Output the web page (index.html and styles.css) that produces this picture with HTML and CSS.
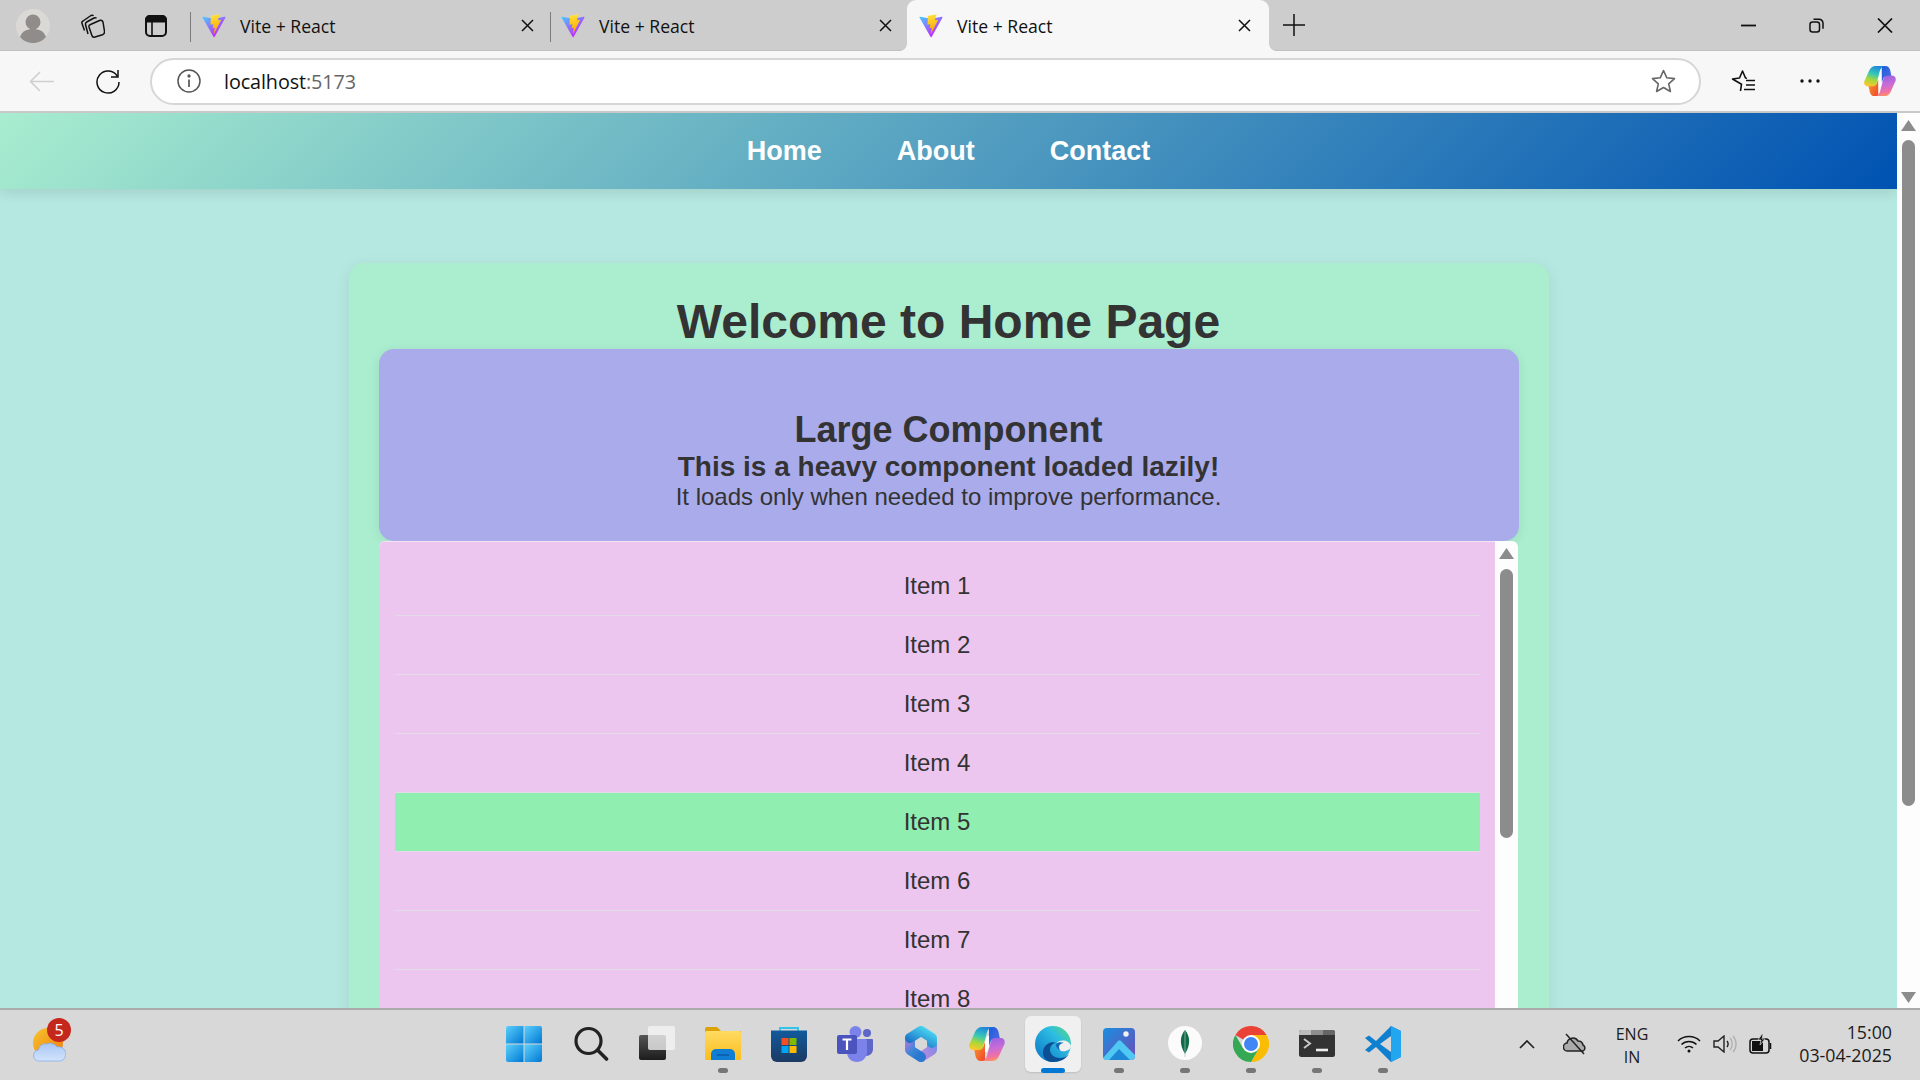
FILE: index.html
```html
<!DOCTYPE html>
<html lang="en">
<head>
<meta charset="utf-8">
<title>Vite + React</title>
<link rel="stylesheet" href="styles.css">
</head>
<body>
<svg class="defs" aria-hidden="true">
  <defs>
    <linearGradient id="viteA" x1="6" y1="33" x2="235" y2="344" gradientUnits="userSpaceOnUse"><stop offset="0" stop-color="#41D1FF"/><stop offset="1" stop-color="#BD34FE"/></linearGradient>
    <linearGradient id="viteB" x1="194" y1="8" x2="236" y2="293" gradientUnits="userSpaceOnUse"><stop offset="0" stop-color="#FFEA83"/><stop offset=".08" stop-color="#FFDD35"/><stop offset="1" stop-color="#FFA800"/></linearGradient>
    <symbol id="vite" viewBox="0 0 410 404">
      <path fill="url(#viteA)" d="M399.641 59.5246L215.643 388.545C211.844 395.338 202.084 395.378 198.228 388.618L10.5817 59.5563C6.38087 52.1896 12.6802 43.2665 21.0281 44.7586L205.223 77.6824C206.398 77.8924 207.601 77.8904 208.776 77.6763L389.119 44.8058C397.439 43.2894 403.768 52.1434 399.641 59.5246Z"/>
      <path fill="url(#viteB)" d="M292.965 1.5744L156.801 28.2552C154.563 28.6937 152.906 30.5903 152.771 32.8664L144.395 174.33C144.198 177.662 147.258 180.248 150.51 179.498L188.42 170.749C191.967 169.931 195.172 173.055 194.443 176.622L183.18 231.775C182.422 235.487 185.907 238.661 189.532 237.56L212.947 230.446C216.577 229.344 220.065 232.527 219.297 236.242L201.398 322.875C200.278 328.294 207.486 331.249 210.492 326.603L212.5 323.5L323.454 102.072C325.312 98.3645 322.108 94.137 318.036 94.9228L279.014 102.454C275.347 103.161 272.227 99.746 273.262 96.1583L298.731 7.86689C299.767 4.27314 296.636 0.855181 292.965 1.5744Z"/>
    </symbol>
    <linearGradient id="copL" x1=".6" y1="0" x2=".3" y2="1"><stop offset="0" stop-color="#1f86dc"/><stop offset=".4" stop-color="#35c8b8"/><stop offset=".7" stop-color="#a8d83a"/><stop offset="1" stop-color="#fcc82a"/></linearGradient>
    <linearGradient id="copR" x1=".4" y1="0" x2=".6" y2="1"><stop offset="0" stop-color="#9a62e0"/><stop offset=".45" stop-color="#c86cd8"/><stop offset=".8" stop-color="#f272a0"/><stop offset="1" stop-color="#ff9a50"/></linearGradient>
    <linearGradient id="copT" x1="0" y1="0" x2="1" y2="1"><stop offset="0" stop-color="#1a5fd8"/><stop offset="1" stop-color="#5a6be8"/></linearGradient>
    <linearGradient id="copB" x1="0" y1="0" x2="1" y2="1"><stop offset="0" stop-color="#f8a030"/><stop offset="1" stop-color="#f0442c"/></linearGradient>
    <symbol id="copilot" viewBox="0 0 36 36">
      <path fill="#fff" d="M18 10h6l-6 16h-6z"/>
      <path fill="url(#copT)" d="M20 1h4c3 0 5 2 5.500 5L31 13h-6c-2 0-3 1-3.500 3L20 20z"/>
      <path fill="url(#copB)" d="M16 35h-4c-3 0-5-2-5.500-5L5 23h6c2 0 3-1 3.500-3L16 16z"/>
      <path fill="url(#copL)" d="M13 1h11c-3 0-5 2-6 5l-4 15c-.7 2-2 3-4 3H4c-3 0-4.500-3-3.500-6L6 6c1-3 4-5 7-5z"/>
      <path fill="url(#copR)" d="M23 35H12c3 0 5-2 6-5l4-15c.7-2 2-3 4-3h6c3 0 4.500 3 3.500 6L30 30c-1 3-4 5-7 5z"/>
    </symbol>
    <linearGradient id="winG" x1="0" y1="0" x2="1" y2="1"><stop offset="0" stop-color="#5ccffb"/><stop offset="1" stop-color="#0078d4"/></linearGradient>
    <linearGradient id="tvG" x1="0" y1="0" x2="0" y2="1"><stop offset="0" stop-color="#555"/><stop offset="1" stop-color="#1c1c1c"/></linearGradient>
    <linearGradient id="foldG" x1="0" y1="0" x2="0" y2="1"><stop offset="0" stop-color="#ffdb62"/><stop offset="1" stop-color="#fbbd1c"/></linearGradient>
    <linearGradient id="bagG" x1="0" y1="0" x2="0" y2="1"><stop offset="0" stop-color="#115a9c"/><stop offset="1" stop-color="#1c3a64"/></linearGradient>
    <linearGradient id="msA" x1="0" y1="1" x2="1" y2="0"><stop offset="0" stop-color="#1a6fc8"/><stop offset="1" stop-color="#48d6f0"/></linearGradient>
    <linearGradient id="msB" x1="0" y1="0" x2=".6" y2="1"><stop offset="0" stop-color="#a57ae0"/><stop offset=".6" stop-color="#3a86d8"/><stop offset="1" stop-color="#2a78d0"/></linearGradient>
    <linearGradient id="msC" x1="1" y1="0" x2="0" y2="1"><stop offset="0" stop-color="#7f8ae6"/><stop offset="1" stop-color="#c48adc"/></linearGradient>
    <linearGradient id="edgeG" x1="1" y1="0" x2="0" y2="1"><stop offset="0" stop-color="#5ddc72"/><stop offset=".35" stop-color="#2dbde2"/><stop offset="1" stop-color="#0a72c4"/></linearGradient>
    <linearGradient id="photoG" x1="0" y1="0" x2="1" y2="1"><stop offset="0" stop-color="#1a8fe0"/><stop offset="1" stop-color="#6c4cb8"/></linearGradient>
    <linearGradient id="sunG" x1="0" y1="0" x2="1" y2="1"><stop offset="0" stop-color="#f7c52d"/><stop offset="1" stop-color="#f07a10"/></linearGradient>
    <linearGradient id="cloudG" x1="0" y1="0" x2="0" y2="1"><stop offset="0" stop-color="#a8c7f5"/><stop offset="1" stop-color="#d2e4fb"/></linearGradient>
  </defs>
</svg>

<header class="tabstrip">
  <svg class="avatar" viewBox="0 0 34 34"><circle cx="17" cy="17" r="17" fill="#dbd9d6"/><circle cx="17" cy="13" r="7.500" fill="#8f8c89"/><path d="M4 28c2-6 7-8 13-8s11 2 13 8a17 17 0 0 1-26 0z" fill="#8f8c89"/></svg>
  <svg class="ico-collections" viewBox="0 0 24 24" fill="none" stroke="#111" stroke-width="1.500" stroke-linejoin="round"><path d="M3.500 16.500 1 9.500c-.4-1 0-2 1-2.500L10 1.500c1-.5 2-.3 2.500.3"/><path d="M7 20 4.500 10.500c-.3-1 .2-2 1.200-2.500L13 4c1-.5 2-.3 2.500.4"/><path d="M9.500 10.500 18.500 6.500c1.500-.6 3 .2 3.500 1.500l1.500 9.500c.2 1.500-.5 2.700-2 3.200L14 23c-1.500.4-2.800-.3-3.200-1.800L8 13c-.3-1 .3-2 1.500-2.500z"/></svg>
  <svg class="ico-tabs" viewBox="0 0 22 22" fill="none" stroke="#111" stroke-width="2"><rect x="1" y="1" width="20" height="20" rx="4"/><path d="M1 6.500h20V5a4 4 0 0 0-4-4H5a4 4 0 0 0-4 4z" fill="#111"/><path d="M7 6.500V21" stroke-width="1.600"/></svg>
  <div class="tab tab-first">
    <svg class="favicon"><use href="#vite"/></svg><span class="tab-title">Vite + React</span>
    <svg class="tab-x" viewBox="0 0 13 13" stroke="#111" stroke-width="1.500"><path d="M1 1l11 11M12 1 1 12"/></svg>
  </div>
  <div class="tab tab-mid">
    <svg class="favicon"><use href="#vite"/></svg><span class="tab-title">Vite + React</span>
    <svg class="tab-x" viewBox="0 0 13 13" stroke="#111" stroke-width="1.500"><path d="M1 1l11 11M12 1 1 12"/></svg>
  </div>
  <div class="tab tab-active">
    <svg class="favicon"><use href="#vite"/></svg><span class="tab-title">Vite + React</span>
    <svg class="tab-x" viewBox="0 0 13 13" stroke="#111" stroke-width="1.500"><path d="M1 1l11 11M12 1 1 12"/></svg>
  </div>
  <svg class="ico-plus" viewBox="0 0 22 22" stroke="#111" stroke-width="1.500"><path d="M11 0v22M0 11h22"/></svg>
  <div class="winbtns">
    <svg class="win-ico" viewBox="0 0 15 15" stroke="#111" stroke-width="1.800"><path d="M0 7.500h15"/></svg>
    <svg class="win-ico" viewBox="0 0 15 15" fill="none" stroke="#111" stroke-width="1.500"><rect x="1" y="4" width="9.500" height="10" rx="2.500"/><path d="M4.500 1.200h5.500a4 4 0 0 1 4 4v5.500"/></svg>
    <svg class="win-ico win-x" viewBox="0 0 16 15" stroke="#111" stroke-width="1.700"><path d="M1 .5l14 14M15 .5l-14 14"/></svg>
  </div>
</header>

<div class="toolbar">
  <svg class="ico-back" viewBox="0 0 25 21" fill="none" stroke="#cfcfcf" stroke-width="1.600"><path d="M25 10.500H1.500M11 1l-9.500 9.500L11 20"/></svg>
  <svg class="ico-reload" viewBox="0 0 24 25" fill="none" stroke="#111" stroke-width="1.500"><path d="M21.500 7.500A11 11 0 1 0 23 13"/><path d="M22 1v7h-7"/></svg>
  <div class="address">
    <svg class="ico-info" viewBox="0 0 24 24" fill="none" stroke="#555" stroke-width="1.500"><circle cx="12" cy="12" r="11"/><path d="M12 10.500V18" stroke-width="1.700"/><circle cx="12" cy="7" r=".9" fill="#555"/></svg>
    <span class="url">localhost<span class="url-port">:5173</span></span>
    <svg class="ico-star" viewBox="0 0 25 24" fill="none" stroke="#666" stroke-width="1.600" stroke-linejoin="round"><path d="M12.500 1.500l3.300 7.300 7.700.8-5.800 5.200 1.700 7.700-6.900-4-6.900 4 1.700-7.700L1.500 9.600l7.700-.8z"/></svg>
  </div>
  <svg class="ico-favs" viewBox="0 0 25 24" fill="none" stroke="#111" stroke-width="1.600" stroke-linejoin="round"><path d="M9.500 22l1-6.800L1.500 10l7-1 3-7 3 7 1.500.3"/><path d="M15 11.500h9M15 16h9M13 20.500h11"/></svg>
  <svg class="ico-dots" viewBox="0 0 20 4" fill="#111"><circle cx="2" cy="2" r="1.700"/><circle cx="10" cy="2" r="1.700"/><circle cx="18" cy="2" r="1.700"/></svg>
  <svg class="ico-copilot-top"><use href="#copilot"/></svg>
</div>

<div class="viewport">
  <main class="page">
    <nav class="topnav">
      <a class="navlink">Home</a>
      <a class="navlink">About</a>
      <a class="navlink">Contact</a>
    </nav>
    <section class="card">
      <h1 class="title">Welcome to Home Page</h1>
      <div class="heavy">
        <h2 class="heavy-title">Large Component</h2>
        <h3 class="heavy-sub">This is a heavy component loaded lazily!</h3>
        <p class="heavy-text">It loads only when needed to improve performance.</p>
      </div>
      <div class="listbox">
        <ul class="items">
          <li class="item">Item 1</li>
          <li class="item">Item 2</li>
          <li class="item">Item 3</li>
          <li class="item">Item 4</li>
          <li class="item item-hover">Item 5</li>
          <li class="item">Item 6</li>
          <li class="item">Item 7</li>
          <li class="item">Item 8</li>
        </ul>
        <div class="inner-scroll">
          <svg class="tri" viewBox="0 0 15 11" fill="#8c8c8c"><path d="M7.500 0 15 11H0z"/></svg>
          <div class="inner-thumb"></div>
        </div>
      </div>
    </section>
  </main>
  <aside class="page-scroll">
    <svg class="tri" viewBox="0 0 15 11" fill="#8c8c8c"><path d="M7.500 0 15 11H0z"/></svg>
    <div class="page-thumb"></div>
    <svg class="tri tri-down" viewBox="0 0 15 11" fill="#8c8c8c"><path d="M7.500 11 15 0H0z"/></svg>
  </aside>
</div>

<footer class="taskbar">
  <div class="weather">
    <svg class="weather-ico" viewBox="0 0 33 34"><circle cx="15" cy="15" r="15" fill="url(#sunG)"/><path d="M6.500 33a5.500 5.500 0 0 1-1-11 6.500 6.500 0 0 1 8-6 8.500 8.500 0 0 1 10.500 3 6.500 6.500 0 0 1 3.500 14z" fill="url(#cloudG)" stroke="#86aeea" stroke-width=".8"/></svg>
    <span class="badge">5</span>
  </div>
  <div class="slot"><svg class="tb-ico tb-win" viewBox="0 0 36 36"><path d="M2 0h15.500v17.500H0V2a2 2 0 0 1 2-2z" fill="url(#winG)"/><path d="M18.500 0H34a2 2 0 0 1 2 2v15.500H18.500z" fill="url(#winG)"/><path d="M0 18.500h17.500V36H2a2 2 0 0 1-2-2z" fill="url(#winG)"/><path d="M18.500 18.500H36V34a2 2 0 0 1-2 2H18.500z" fill="url(#winG)"/></svg></div>
  <div class="slot"><svg class="tb-ico" viewBox="0 0 36 36" fill="none" stroke="#222" stroke-width="3.200" stroke-linecap="round"><circle cx="15.500" cy="15" r="12.500"/><path d="M25 24.500l8.500 8.500" stroke-width="3.600"/></svg></div>
  <div class="slot"><svg class="tb-ico" viewBox="0 0 36 36"><rect x="0" y="9" width="27" height="25" rx="2" fill="url(#tvG)"/><rect x="9" y="0" width="27" height="24" rx="2" fill="#f4f4f4" fill-opacity=".78"/></svg></div>
  <div class="slot"><svg class="tb-ico" viewBox="0 0 36 36"><path d="M0 3a2 2 0 0 1 2-2h10l4 4h20v6H0z" fill="#dda208"/><rect x="0" y="5" width="36" height="29" rx="1.500" fill="url(#foldG)"/><path d="M6 34v-6a5 5 0 0 1 5-5h14a5 5 0 0 1 5 5v6z" fill="#0f7ed2"/><path d="M12 29h12" stroke="#0a4f9c" stroke-width="1.200"/></svg><i class="pill"></i></div>
  <div class="slot"><svg class="tb-ico" viewBox="0 0 36 36"><path d="M9 8V2h18v6" fill="none" stroke="#2fc4ec" stroke-width="1.800"/><path d="M0 4.500h36V30a6 6 0 0 1-6 6H6a6 6 0 0 1-6-6z" fill="url(#bagG)"/><rect x="10.500" y="12" width="7" height="7" fill="#f25022"/><rect x="18.500" y="12" width="7" height="7" fill="#7fba00"/><rect x="10.500" y="20" width="7" height="7" fill="#00a4ef"/><rect x="18.500" y="20" width="7" height="7" fill="#ffb900"/></svg></div>
  <div class="slot"><svg class="tb-ico" viewBox="0 0 36 36"><circle cx="30" cy="7" r="4" fill="#5f66c9"/><path d="M24 13h11a1 1 0 0 1 1 1v9c0 4-3 7-7 7-2 0-4-1-5-2z" fill="#5f66c9"/><circle cx="18.500" cy="6" r="6" fill="#7b83eb"/><path d="M10 13h18a2 2 0 0 1 2 2v11c0 6-5 10-10 10-6 0-10-4-10-10z" fill="#7b83eb"/><rect x="0" y="9" width="20" height="19" rx="2" fill="#4b53bc"/><path d="M5.500 13.500h9M10 13.500V24" stroke="#fff" stroke-width="2.200" fill="none"/></svg></div>
  <div class="slot"><svg class="tb-ico" viewBox="0 0 36 36" fill="none" stroke-width="10" stroke-linejoin="round" stroke-linecap="round"><path d="M29 16v8l-11 7" stroke="url(#msC)"/><path d="M18 31 7 24V12" stroke="url(#msB)"/><path d="M7 12l11-7 11 7v5" stroke="url(#msA)"/></svg></div>
  <div class="slot"><svg class="tb-ico"><use href="#copilot"/></svg></div>
  <div class="slot slot-active"><svg class="tb-ico" viewBox="0 0 36 36"><circle cx="18" cy="18" r="18" fill="url(#edgeG)"/><path d="M18 36C9 36 6 28 9 22c2-4 7-7 12-5-3 0-6 3-6 7 0 5 5 8 10 8 3 0 6-1 9-4-3 5-9 8-16 8z" fill="#0d4f94"/><path d="M36 21c-1 3-6 5-10 4-4-1-6-5-4-8 2-3 8-3 11-1 2 1 3 3 3 5z" fill="#f0f0f0"/><path d="M21 18c2-2 5-2 8-1-3 0-5 2-5 4 0 2 1 3 2 4-3-1-6-4-5-7z" fill="#0d6cb8"/></svg><i class="pill pill-active"></i></div>
  <div class="slot"><svg class="tb-ico tb-photo" viewBox="0 0 32 32"><rect width="32" height="32" rx="4" fill="url(#photoG)"/><circle cx="23" cy="6" r="2.700" fill="#f2f2f2"/><path d="M0 30 15 13c1-1 2-1 3 0L32 27v1a4 4 0 0 1-4 4H4a4 4 0 0 1-4-2z" fill="#50c8f4"/><path d="M6 32 16 21l11 11z" fill="#1f88d6"/></svg><i class="pill"></i></div>
  <div class="slot"><svg class="tb-ico" viewBox="0 0 36 36"><circle cx="18" cy="17" r="17" fill="#fbfbfb"/><path d="M18 4c5 6 6 14 0 24-6-10-5-18 0-24z" fill="#0f6b4a"/><path d="M18 4v27" stroke="#a6c8b4" stroke-width=".7"/></svg><i class="pill"></i></div>
  <div class="slot"><svg class="tb-ico" viewBox="0 0 36 36"><path d="M18 18 2.400 9A18 18 0 0 1 33.600 9H18z" fill="#ea4335"/><path d="M33.600 9A18 18 0 0 1 18 36l7.800-13.500L18 9z" fill="#fbbc04"/><path d="M18 36A18 18 0 0 1 2.400 9l7.800 13.500 15.600 0z" fill="#34a853"/><circle cx="18" cy="18" r="9" fill="#fff"/><circle cx="18" cy="18" r="7" fill="#4285f4"/></svg><i class="pill"></i></div>
  <div class="slot"><svg class="tb-ico" viewBox="0 0 36 36"><rect y="4" width="36" height="27" rx="2.500" fill="#333"/><path d="M0 9V6.500A2.500 2.500 0 0 1 2.500 4H12v5z" fill="#bdbdbd"/><path d="M12 4h12v5H12z" fill="#8e8e8e"/><path d="M24 4h9.500A2.500 2.500 0 0 1 36 6.500V9H24z" fill="#666"/><path d="M5 13l6 4.500L5 22" fill="none" stroke="#c9c9c9" stroke-width="2"/><path d="M17 24h12" stroke="#eee" stroke-width="2.600"/></svg><i class="pill"></i></div>
  <div class="slot"><svg class="tb-ico" viewBox="0 0 36 36"><path fill-rule="evenodd" d="M26 0 11 15 4 9.500 0 12l7 6-7 6 4 2.500L11 21l15 15 10-5V5zM26 10 15 18l11 8z" fill="#0f7fd0"/><path d="M26 0l10 5v26l-10 5z" fill="#23a6f0"/></svg><i class="pill"></i></div>
  <div class="tray">
    <svg class="tr-chev" viewBox="0 0 16 9" fill="none" stroke="#222" stroke-width="1.700"><path d="M1 8l7-7 7 7"/></svg>
    <svg class="tr-cloud" viewBox="0 0 24 22" fill="none" stroke="#222" stroke-width="1.500"><path d="M5 18a4 4 0 0 1-1-8 6 6 0 0 1 11-2 5 5 0 0 1 5 4 3.300 3.300 0 0 1 0 6z" fill="#8d8d8d" fill-opacity=".6"/><path d="M3 1l18 20"/></svg>
    <div class="lang"><span>ENG</span><span>IN</span></div>
    <svg class="tr-wifi" viewBox="0 0 24 18" fill="none" stroke="#111" stroke-width="1.500"><path d="M1 6a16 16 0 0 1 22 0M4.500 9.500a11 11 0 0 1 15 0M8 13a6 6 0 0 1 8 0"/><circle cx="12" cy="16" r="1.500" fill="#111" stroke="none"/></svg>
    <svg class="tr-vol" viewBox="0 0 24 18" fill="none" stroke="#222" stroke-width="1.400"><path d="M1 6h4l6-5v16l-6-5H1z"/><path d="M14 6a5 5 0 0 1 0 6"/><path d="M17 3a9 9 0 0 1 0 12M20 1a12 12 0 0 1 0 16" stroke="#b2b2b2"/></svg>
    <svg class="tr-bat" viewBox="0 0 23 20" fill="none" stroke="#111" stroke-width="1.500"><rect x="1" y="5" width="19" height="14" rx="3"/><path d="M21.500 9v6"/><path d="M3 7h9l2 2v8H3z" fill="#111" stroke="none"/><path d="M13 0l-4 6h3l-1 5 5-6h-3l1-5z" fill="#111" stroke="#d8d8d8" stroke-width=".7"/></svg>
    <div class="clock"><span>15:00</span><span>03-04-2025</span></div>
  </div>
</footer>
</body>
</html>
```

FILE: styles.css
```css
* { box-sizing: border-box; }
html, body { margin: 0; height: 100%; }
body {
  display: flex;
  flex-direction: column;
  height: 100vh;
  overflow: hidden;
  font-family: "Liberation Sans", Arial, sans-serif;
  background: #f7f7f7;
}
.defs { display: block; width: 0; height: 0; }

/* tab strip */
.tabstrip {
  flex: 0 0 51px;
  display: flex;
  align-items: flex-start;
  background: #cdcdcd;
  padding-left: 16px;
  box-shadow: inset 0 -1px 0 #c0c0c0;
}
.avatar { width: 34px; height: 34px; margin-top: 9px; flex: none; }
.ico-collections { width: 24px; height: 24px; margin: 14px 0 0 31px; flex: none; }
.ico-tabs { width: 22px; height: 22px; margin: 15px 0 0 40px; flex: none; }
.tab {
  height: 51px;
  display: flex;
  align-items: center;
  flex: none;
  padding: 0 16px 0 12px;
  position: relative;
}
.tab-first { width: 360px; margin-left: 23px; }
.tab-mid { width: 357px; padding-right: 15px; padding-left: 11px; }
.tab-first::before, .tab-mid::before {
  content: "";
  position: absolute;
  left: 0;
  top: 12px;
  height: 30px;
  border-left: 1px solid #7d7d7d;
}
.tab-active {
  width: 362px;
  padding-right: 18px;
  background: #f7f7f7;
  border-radius: 9px 9px 0 0;
}
.tab-active::before, .tab-active::after {
  content: "";
  position: absolute;
  bottom: 0;
  width: 7px;
  height: 7px;
}
.tab-active::before { left: -7px; background: radial-gradient(circle at 0 0, transparent 6.500px, #f7f7f7 7px); }
.tab-active::after { right: -7px; background: radial-gradient(circle at 100% 0, transparent 6.500px, #f7f7f7 7px); }
.favicon { width: 24px; height: 24px; flex: none; }
.tab-title {
  margin-left: 14px;
  flex: 1;
  font-family: "Open Sans", sans-serif;
  font-size: 17.600px;
  color: #111;
  line-height: 20px;
}
.tab-x { width: 13px; height: 13px; flex: none; }
.ico-plus { width: 22px; height: 22px; margin: 14px 0 0 14px; flex: none; }
.winbtns { margin-left: auto; display: flex; gap: 53px; padding: 18px 27px 0 0; }
.win-ico { width: 15px; height: 15px; }
.win-x { width: 16px; }

/* toolbar */
.toolbar {
  flex: 0 0 62px;
  display: flex;
  align-items: center;
  background: #f7f7f7;
  border-bottom: 2px solid #c8c8c8;
  padding-left: 29px;
}
.ico-back { width: 25px; height: 21px; flex: none; }
.ico-reload { width: 24px; height: 25px; margin-left: 42px; flex: none; }
.address {
  width: 1551px;
  height: 47px;
  margin-left: 30px;
  flex: none;
  display: flex;
  align-items: center;
  background: #fff;
  border: 2px solid #d6d6d6;
  border-radius: 24px;
  padding: 0 23px 0 25px;
}
.ico-info { width: 24px; height: 24px; flex: none; }
.url {
  margin-left: 23px;
  flex: 1;
  font-family: "Open Sans", sans-serif;
  font-size: 19.800px;
  color: #111;
  letter-spacing: -.1px;
}
.url-port { color: #666; }
.ico-star { width: 25px; height: 24px; flex: none; }
.ico-favs { width: 25px; height: 24px; margin-left: 30px; flex: none; }
.ico-dots { width: 20px; height: 4px; margin-left: 44px; flex: none; }
.ico-copilot-top { width: 34px; height: 32px; margin-left: 43px; flex: none; }

/* page */
.viewport { flex: 1; display: flex; min-height: 0; }
.page { flex: 1; min-width: 0; overflow: hidden; background: #b5e8e0; }
.topnav {
  height: 76px;
  display: flex;
  justify-content: center;
  align-items: center;
  gap: 75px;
  background: linear-gradient(135deg, #a8edcf, #0052b2);
  box-shadow: 0 4px 12px rgba(0, 0, 0, .1);
}
.navlink { font-size: 27px; font-weight: 700; color: #fff; }
.card {
  width: 1200px;
  margin: 74px auto 0;
  padding: 30px;
  background: #abedcf;
  border-radius: 15px;
  box-shadow: 0 4px 16px rgba(0, 0, 0, .08);
  color: #333;
  text-align: center;
}
.title { margin: 0; padding-top: 1px; font-size: 48px; line-height: 55px; font-weight: 700; }
.heavy {
  height: 192px;
  padding: 60px 30px 0;
  background: #aaabea;
  border-radius: 15px;
  box-shadow: 0 2px 12px rgba(0, 0, 0, .08);
}
.heavy-title { margin: 0; font-size: 36px; line-height: 42px; }
.heavy-sub { margin: 0; font-size: 28px; line-height: 32px; }
.heavy-text { margin: 0; font-size: 24px; line-height: 28px; }
.listbox {
  height: 640px;
  display: flex;
  overflow: hidden;
  background: #fdfdfd;
  border-radius: 6px 6px 0 0;
  margin-right: 1px;
}
.items {
  flex: 1;
  margin: 0;
  padding: 15px 15px 0 16px;
  list-style: none;
  background: #ecc6ee;
  border-top: 1px solid #f3e2f3;
}
.item {
  height: 59px;
  line-height: 58px;
  font-size: 24px;
  border-bottom: 1px solid #e4dbe8;
}
.item-hover { background: #90eeb0; }
.inner-scroll {
  flex: 0 0 23px;
  display: flex;
  flex-direction: column;
  align-items: center;
  padding-top: 7px;
}
.tri { width: 15px; height: 11px; flex: none; display: block; }
.inner-thumb {
  width: 13px;
  height: 269px;
  margin-top: 10px;
  border-radius: 7px;
  background: #8c8c8c;
}
.page-scroll {
  flex: 0 0 23px;
  display: flex;
  flex-direction: column;
  align-items: center;
  padding: 7px 0 5px;
  background: #fdfdfd;
}
.page-thumb {
  width: 13px;
  height: 666px;
  margin-top: 9px;
  border-radius: 7px;
  background: #8c8c8c;
}
.tri-down { margin-top: auto; }

/* taskbar */
.taskbar {
  flex: 0 0 72px;
  display: flex;
  align-items: flex-start;
  padding-top: 6px;
  background: #d8d8d8;
  border-top: 2px solid #ababab;
  gap: 10px;
  font-family: "Open Sans", sans-serif;
  color: #1c1c1c;
}
.weather { width: 487px; flex: none; position: relative; height: 56px; }
.weather-ico { width: 33px; height: 34px; display: block; margin: 12px 0 0 33px; }
.badge {
  position: absolute;
  left: 47px;
  top: 2px;
  width: 24px;
  height: 24px;
  border-radius: 50%;
  background: #c4281c;
  color: #fff;
  font-size: 16px;
  line-height: 24px;
  text-align: center;
}
.slot {
  width: 56px;
  height: 56px;
  flex: none;
  display: flex;
  flex-direction: column;
  align-items: center;
  padding-top: 10px;
}
.slot-active { background: #f0f0f0; border-radius: 6px; box-shadow: 0 1px 2px rgba(0,0,0,.12); }
.tb-ico { width: 36px; height: 36px; flex: none; display: block; }
.tb-win { margin-right: 3px; }
.tb-photo { width: 32px; height: 32px; margin: 2px 0; }
.pill { width: 10px; height: 5px; margin-top: 6px; border-radius: 3px; background: #767676; flex: none; }
.pill-active { width: 24px; background: #0078d4; }
.tray { flex: 1; height: 56px; margin-left: 98px; display: flex; align-items: center; }
.tr-chev { width: 16px; height: 9px; flex: none; }
.tr-cloud { width: 24px; height: 22px; margin-left: 28px; flex: none; }
.lang {
  width: 44px;
  margin-left: 23px;
  display: flex;
  flex-direction: column;
  align-items: center;
  font-size: 16px;
  line-height: 23px;
  padding-top: 3px;
}
.tr-wifi { width: 24px; height: 18px; margin-left: 23px; flex: none; }
.tr-vol { width: 24px; height: 18px; margin-left: 12px; flex: none; }
.tr-bat { width: 23px; height: 20px; margin-left: 12px; flex: none; }
.clock {
  margin-left: auto;
  padding-right: 28px;
  display: flex;
  flex-direction: column;
  align-items: flex-end;
  font-size: 17.800px;
  line-height: 23px;
}
```
